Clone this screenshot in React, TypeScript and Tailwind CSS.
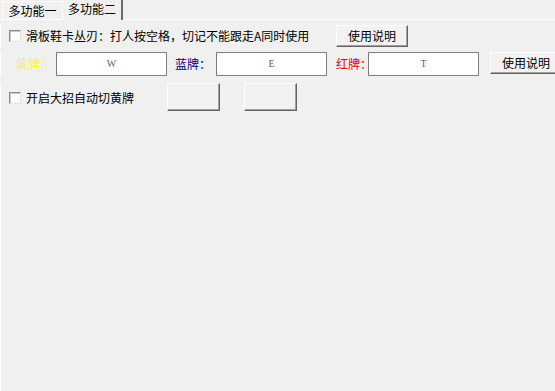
import React from "react"

const font = { fontFamily: '"Noto Sans CJK SC", "Liberation Sans", sans-serif' }

function CheckBox() {
  return (
    <div className="h-[12px] w-[12px] shrink-0 border border-t-[#8a8a8a] border-l-[#8a8a8a] border-b-[#e4e4e4] border-r-[#e4e4e4] bg-white shadow-[inset_1px_1px_0_#c8c8c8]" />
  )
}

function Button({ label, className }: { label?: string; className: string }) {
  return (
    <div
      className={
        "flex shrink-0 items-center justify-center border border-t-white border-l-white border-b-[#646464] border-r-[#646464] bg-[#f2f2f2] text-[12px] whitespace-nowrap text-black shadow-[inset_-1px_-1px_0_#a0a0a0] " +
        className
      }
    >
      {label}
    </div>
  )
}

function KeyInput({ value }: { value: string }) {
  return (
    <div className="flex h-[24px] w-[111px] shrink-0 items-center justify-center border border-[#7c7c7c] bg-white text-[10px] text-[#606060] [font-family:'Liberation_Serif',serif]">
      {value}
    </div>
  )
}

export default function App() {
  return (
    <div className="h-[391px] w-[555px] overflow-hidden bg-[#f0f0f0] text-[12px] leading-none text-black" style={font}>
      {/* Tabs */}
      <div className="flex h-[20px] items-end border-b border-white pl-[2px]">
        <div className="flex h-[18px] w-[60px] items-center justify-center border-l border-t border-white text-[12px]">
          多功能一
        </div>
        <div className="-mb-px flex h-[21px] w-[61px] items-center justify-center border-l border-t border-white border-r-2 border-r-[#6a6a6a] bg-[#f0f0f0] pb-[2px] text-[12px]">
          多功能二
        </div>
      </div>

      {/* Row 1 */}
      <div className="mt-[5px] flex h-[22px] items-center border-l border-white pl-[8px]">
        <div className="flex w-[327px] shrink-0 items-center gap-[5px]">
          <CheckBox />
          <span className="whitespace-nowrap">滑板鞋卡丛刃：打人按空格，切记不能跟走A同时使用</span>
        </div>
        <Button label="使用说明" className="h-[22px] w-[72px]" />
      </div>

      {/* Row 2 */}
      <div className="mt-[5px] flex h-[24px] items-start border-l border-white pl-[15px]">
        <span className="mt-[6px] w-[40px] shrink-0 whitespace-nowrap text-[#ffff00]">黄牌：</span>
        <KeyInput value="W" />
        <span className="mt-[6px] w-[49px] shrink-0 whitespace-nowrap pl-[8px] text-[#000080]">蓝牌：</span>
        <KeyInput value="E" />
        <span className="mt-[6px] w-[41px] shrink-0 whitespace-nowrap pl-[9px] text-[#e00000]">红牌：</span>
        <KeyInput value="T" />
        <Button label="使用说明" className="ml-[11px] h-[22px] w-[72px]" />
      </div>

      {/* Row 3 */}
      <div className="mt-[7px] flex items-center border-l border-white pl-[8px]">
        <div className="flex w-[158px] shrink-0 items-center gap-[5px] pt-[1px]">
          <CheckBox />
          <span className="whitespace-nowrap">开启大招自动切黄牌</span>
        </div>
        <Button className="h-[28px] w-[53px]" />
        <Button className="ml-[24px] h-[28px] w-[53px]" />
      </div>

      <div className="h-[280px] border-l border-white" />
    </div>
  )
}
